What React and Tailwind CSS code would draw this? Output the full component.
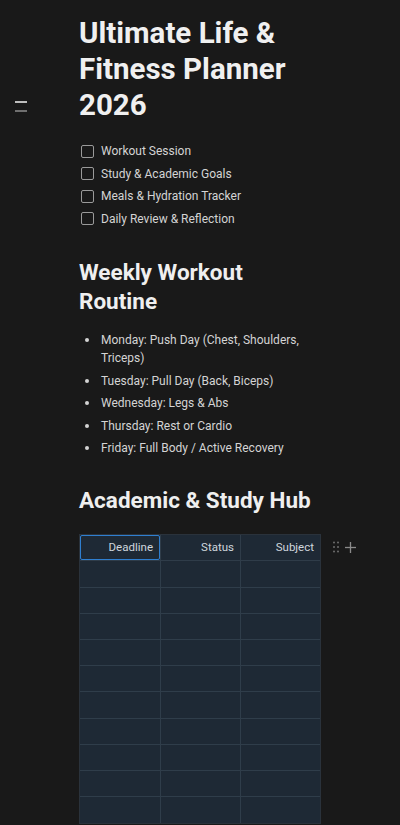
const todos = [
  "Workout Session",
  "Study & Academic Goals",
  "Meals & Hydration Tracker",
  "Daily Review & Reflection",
];

const routine = [
  "Monday: Push Day (Chest, Shoulders, Triceps)",
  "Tuesday: Pull Day (Back, Biceps)",
  "Wednesday: Legs & Abs",
  "Thursday: Rest or Cardio",
  "Friday: Full Body / Active Recovery",
];

const columns = ["Deadline", "Status", "Subject"];
const rows = Array.from({ length: 10 });

export default function App() {
  return (
    <div className="min-h-[825px] w-[400px] overflow-hidden bg-[#191919] font-['Roboto','Liberation_Sans',sans-serif] text-[#e6e6e6]">
      <div className="flex">
        {/* side handle */}
        <div className="w-[79px] shrink-0 pt-[101px] pl-[15px]">
          <div className="flex flex-col gap-[7px]">
            <span className="block h-[2px] w-[12px] bg-[#bdbdbd]" />
            <span className="block h-[2px] w-[12px] bg-[#6f6f6f]" />
          </div>
        </div>

        <div className="flex-1 pt-[15px]">
          <h1 className="text-[29.5px] font-bold leading-[36px] text-[#f0f0f0]">
            Ultimate Life &amp;<br />
            Fitness Planner<br />
            2026
          </h1>

          <ul className="mt-[17px] flex flex-col">
            {todos.map((t) => (
              <li key={t} className="flex h-[22.5px] items-center gap-[7px] pl-[2px] text-[12px] text-[#d4d4d4]">
                <span className="block h-[13px] w-[13px] rounded-[2px] border-[1.5px] border-[#9a9a9a]" />
                {t}
              </li>
            ))}
          </ul>

          <h2 className="mt-[28px] text-[22.5px] font-bold leading-[29px] text-[#efefef]">
            Weekly Workout<br />
            Routine
          </h2>

          <ul className="mt-[15px] flex flex-col gap-[4.6px] pr-[80px]">
            {routine.map((r) => (
              <li key={r} className="flex text-[12px] leading-[18px] text-[#d4d4d4]">
                <span className="flex h-[18px] w-[22px] shrink-0 items-center pl-[6px]">
                  <span className="block h-[4px] w-[4px] rounded-full bg-[#d4d4d4]" />
                </span>
                <span>{r}</span>
              </li>
            ))}
          </ul>

          <h2 className="mt-[29px] text-[22.5px] font-bold leading-[29px] text-[#efefef]">
            Academic &amp; Study Hub
          </h2>

          <div className="mt-[19px] flex items-start">
            <div className="w-[242px] border border-[#2a323b] bg-[#1e2935]">
              <div className="grid h-[26px] grid-cols-3 border-b border-[#2f3c49]">
                {columns.map((c, i) => (
                  <div
                    key={c}
                    className={
                      i === 0
                        ? "flex items-center justify-end rounded-[2px] border-[1.5px] border-[#2f7fd0] pr-[6px] text-[11.5px] text-[#cfd6dd]"
                        : "flex items-center justify-end border-l border-[#2f3c49] pr-[6px] text-[11.5px] text-[#cfd6dd]"
                    }
                  >
                    {c}
                  </div>
                ))}
              </div>
              {rows.map((_, r) => (
                <div key={r} className="grid h-[26.2px] grid-cols-3 border-b border-[#2f3d4a] last:border-b-0">
                  <div />
                  <div className="border-l border-[#2f3d4a]" />
                  <div className="border-l border-[#2f3d4a]" />
                </div>
              ))}
            </div>

            <div className="ml-[12px] mt-[7px] flex items-center gap-[6px] text-[#7a7a7a]">
              <svg width="6" height="12" viewBox="0 0 6 12" fill="#6e6e6e">
                <circle cx="1" cy="1.5" r="1" />
                <circle cx="5" cy="1.5" r="1" />
                <circle cx="1" cy="6" r="1" />
                <circle cx="5" cy="6" r="1" />
                <circle cx="1" cy="10.5" r="1" />
                <circle cx="5" cy="10.5" r="1" />
              </svg>
              <svg width="11" height="11" viewBox="0 0 11 11" stroke="#8a8a8a" strokeWidth="1.3">
                <line x1="5.5" y1="0" x2="5.5" y2="11" />
                <line x1="0" y1="5.5" x2="11" y2="5.5" />
              </svg>
            </div>
          </div>
        </div>
      </div>
    </div>
  );
}
